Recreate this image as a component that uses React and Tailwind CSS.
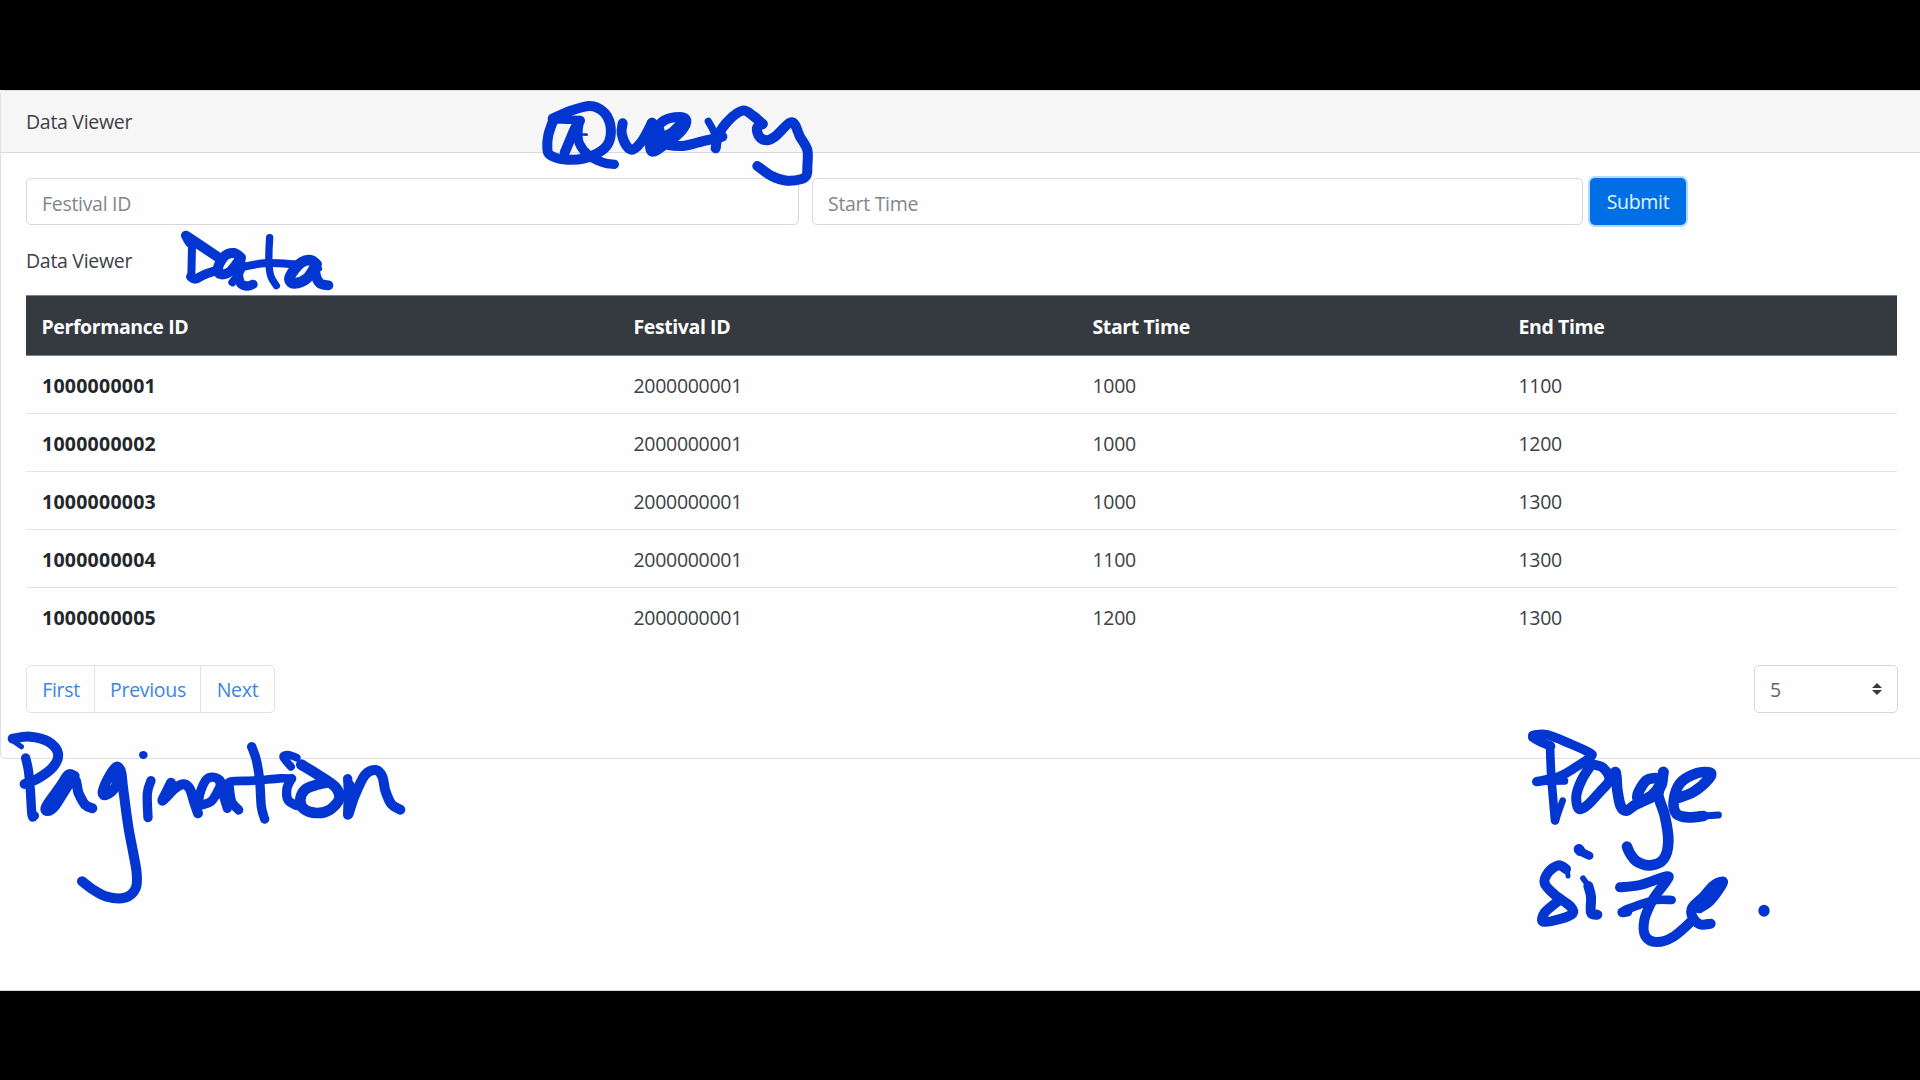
import React from "react";

const rows = [
  ["1000000001", "2000000001", "1000", "1100"],
  ["1000000002", "2000000001", "1000", "1200"],
  ["1000000003", "2000000001", "1000", "1300"],
  ["1000000004", "2000000001", "1100", "1300"],
  ["1000000005", "2000000001", "1200", "1300"],
];

// Pen strokes: each string is a list of "x,y" points, optionally prefixed by "width|".
const ink = [
  {
    at: "translate(520 80) scale(0.33333)",
    strokes: [
      "98,116 150,93 210,78 250,95 270,130 269,180 245,212 190,236 130,238 90,225 82,205 85,165 100,120",
      "26|98,118 140,119 178,120",
      "30|180,122 165,145 150,180 134,218",
      "28|178,124 174,155 178,190 205,225 250,248 283,253",
      "8|180,163 200,164",
      "308,130 305,160 320,198 340,208 368,180 396,128",
      "30|396,128 390,170 396,215 440,190 485,152 499,122 480,111 430,123 404,160 420,186 480,198 540,186 607,170",
      "32|395,180 402,140 418,152 410,190",
      "24|420,170 450,158 480,130",
      "22|565,124 583,160 587,207",
      "587,205 595,165 625,122 668,92 700,108 728,132",
      "728,132 711,144 718,170 740,181 765,170 815,127 840,170 862,210 862,260 860,285 845,297 800,302 755,288 712,258",
    ],
  },
  {
    at: "translate(170 225) scale(0.33333)",
    strokes: [
      "30|48,32 85,57 145,97",
      "22|46,34 52,48 60,58",
      "24|66,62 65,110 64,154",
      "28|62,155 77,162 105,148 145,135",
      "213,98 192,84 165,92 145,125 150,147 180,140 213,98",
      "24|213,98 213,135 187,172",
      "28|205,150 212,175 230,183 249,178",
      "24|212,127 290,114 375,118",
      "22|299,38 297,75 297,120 303,155 319,182",
      "32|440,118 422,106 395,112 370,138 358,163 373,175 410,161 437,122",
      "30|437,122 437,150 450,175 475,181",
      "12|445,120 451,132",
    ],
  },
  {
    at: "translate(0 640) scale(0.33333)",
    strokes: [
      "16|64,320 45,306",
      "38,296 90,290 145,305 174,340 160,380 115,415 74,432",
      "28|77,354 85,390 91,450 96,525 103,527",
      "224,408 205,404 180,440 139,498 142,513 165,498 220,418 236,460 255,494 277,505",
      "362,390 350,380 328,408 308,455 318,465 345,443 362,395 370,450 385,560 400,640 410,700 407,745 375,773 320,770 275,746 246,724",
      "28|453,422 442,460 444,533",
      "30|513,428 500,455 488,482 525,445 552,433 570,448 582,485 594,520",
      "28|594,498 600,460 618,420 642,412 663,427 650,460 632,485 605,495",
      "28|658,420 667,455 682,505",
      "28|687,435 695,485 716,510",
      "26|680,435 695,424 760,422 840,415 876,416",
      "28|755,320 769,360 779,420 784,500 794,537",
      "24|873,380 850,352 864,344 890,353",
      "28|874,416 861,445 864,480 890,497",
      "32|904,374 950,402 1005,440 1018,475 990,509 950,519 912,507 901,480 914,450 945,436 980,428",
      "28|1043,416 1045,460 1043,525",
      "30|1046,522 1065,465 1095,405 1127,390 1147,410 1156,452 1174,492 1201,509",
      "14|1055,430 1062,443",
    ],
    dots: [[430, 345, 13, 12]],
  },
  {
    at: "translate(1510 710) scale(0.33333)",
    strokes: [
      "28|68,82 90,95 122,108",
      "28|68,76 110,74 180,101 235,126 243,140 190,176 145,201 80,215",
      "26|120,108 124,200 135,331",
      "20|137,333 148,300 158,272",
      "22|80,215 164,213",
      "30|243,165 215,210 199,258 207,297 235,283 270,245 298,210 280,174 252,164",
      "32|300,212 317,187 322,240 332,288 350,302 375,285 425,262",
      "32|435,204 408,212 383,253 390,272 425,256 450,225 460,186",
      "32|460,186 456,220 445,255 465,320 475,395 461,447 420,466 380,454 360,430 351,410",
      "32|500,265 550,246 596,207 600,188 560,190 510,220 491,275 500,312 535,322 580,318",
      "21|580,318 625,315",
      "32|207,418 210,422",
      "25|210,424 238,437",
      "15|174,498 172,480",
      "30|168,477 145,466 115,487 104,520 135,555 180,588 188,610 150,627 100,635 104,608 142,575",
      "17|219,505 232,522",
      "30|235,528 243,560 243,608 262,614",
      "30|330,532 390,525 470,499 468,515 445,545 425,575 403,630 406,678 440,696 490,680 545,633",
      "30|337,607 352,605",
      "26|345,600 400,580 440,570 485,570",
      "30|568,595 600,573 636,524 635,515 610,527 580,560 547,592 547,620 570,643 602,641",
    ],
    dots: [[762, 602, 17, 18]],
  },
];

function smoothPath(points) {
  const p = points.split(" ").map((s) => s.split(",").map(Number));
  let d = `M${p[0][0]} ${p[0][1]}`;
  for (let i = 0; i < p.length - 1; i++) {
    const a = p[i - 1] || p[i];
    const b = p[i];
    const c = p[i + 1];
    const e = p[i + 2] || c;
    d += `C${b[0] + (c[0] - a[0]) / 6} ${b[1] + (c[1] - a[1]) / 6} ${c[0] - (e[0] - b[0]) / 6} ${c[1] - (e[1] - b[1]) / 6} ${c[0]} ${c[1]}`;
  }
  return d;
}

function Ink() {
  return (
    <svg className="pointer-events-none absolute left-0 top-0 h-[1080px] w-[1920px]" viewBox="0 0 1920 1080" fill="none" stroke="#0336d0" strokeLinecap="round" strokeLinejoin="round">
      {ink.map((word) => (
        <g key={word.at} transform={word.at}>
          {word.strokes.map((s) => {
            const parts = s.split("|");
            return <path key={s} d={smoothPath(parts[parts.length - 1])} strokeWidth={parts.length > 1 ? Number(parts[0]) : 30} />;
          })}
          {(word.dots || []).map(([cx, cy, rx, ry]) => (
            <ellipse key={cx} cx={cx} cy={cy} rx={rx} ry={ry} fill="#0336d0" stroke="none" />
          ))}
        </g>
      ))}
    </svg>
  );
}

const cols = "grid grid-cols-[592px_459px_426px_394px]";

export default function App() {
  return (
    <div className="relative flex h-[1080px] w-[1920px] flex-col overflow-hidden bg-black pt-[90px] font-['Open_Sans','Noto_Sans',sans-serif] text-[19.5px] leading-[30px] tracking-[-0.3px] text-[#3c4146]">
      <main className="h-[901px] border-b border-[#d8d8d8] bg-[#fefefe]">
        <section className="h-[669px] rounded-l-[5px] border border-r-0 border-[#dfdfdf]">
          <header className="flex h-[62px] items-center rounded-tl-[5px] border-b border-[#d9dadb] bg-[#f6f6f6] pl-[25px] pt-px">
            <span>Data Viewer</span>
          </header>
          <div className="pl-[25px] pt-[25px]">
            <form className="flex h-[47px]" onSubmit={(e) => e.preventDefault()}>
              <input className="h-[47px] w-[773px] rounded-[5px] border border-[#d5d8de] bg-[#fefefe] px-[15px] pt-[3px] placeholder:text-[#81878d]" placeholder="Festival ID" />
              <input className="ml-[13px] h-[47px] w-[771px] rounded-[5px] border border-[#d5d8de] bg-[#fefefe] px-[15px] pt-[3px] placeholder:text-[#81878d]" placeholder="Start Time" />
              <button className="ml-[7px] h-[47px] w-[96px] rounded-[5px] bg-[#006fe6] pt-px text-[#e6f3ff] shadow-[0_0_0_2px_#b3d9ff]">Submit</button>
            </form>
            <p className="mt-[21px] h-[49px]">Data Viewer</p>
            <div className="w-[1871px]">
              <div className={`${cols} h-[61px] items-center border-y border-[#7d8287] bg-[#353940] pt-[2px] font-bold tracking-[-0.4px] text-white`}>
                {["Performance ID", "Festival ID", "Start Time", "End Time"].map((h) => (
                  <span key={h} className="pl-[15.5px]">{h}</span>
                ))}
              </div>
              {rows.map((r, i) => (
                <div key={r[0]} className={`${cols} h-[58px] items-center pt-[2px] ${i < 4 ? "border-b border-[#e2e4e6]" : ""}`}>
                  <span className="pl-4 font-bold tracking-[0.25px] text-[#23272b]">{r[0]}</span>
                  <span className="pl-[15.5px]">{r[1]}</span>
                  <span className="pl-[15.5px]">{r[2]}</span>
                  <span className="pl-[15.5px]">{r[3]}</span>
                </div>
              ))}
            </div>
            <div className="mt-[19px] flex w-[1872px] justify-between">
              <nav className="flex h-12 rounded-[5px] border border-[#e0e4e9] pt-0 text-[#3a86df]">
                <a className="flex w-[68px] items-center justify-center border-r border-[#e0e4e9] pl-px pt-[2px]">First</a>
                <a className="flex w-[106px] items-center justify-center border-r border-[#e0e4e9] pl-px pt-[2px]">Previous</a>
                <a className="flex w-[73px] items-center justify-center pt-[2px]">Next</a>
              </nav>
              <div className="flex h-12 w-[144px] items-center justify-between rounded-[5px] border border-[#d5d8de] pl-[15px] pr-[15px] text-[#5f656c]">
                <span className="pt-[2px]">5</span>
                <svg className="h-3 w-[10px]" viewBox="0 0 10 12" fill="#343a40">
                  <path d="M5 0 10 5H0zM5 12 0 7h10z" />
                </svg>
              </div>
            </div>
          </div>
        </section>
      </main>
      <Ink />
    </div>
  );
}
